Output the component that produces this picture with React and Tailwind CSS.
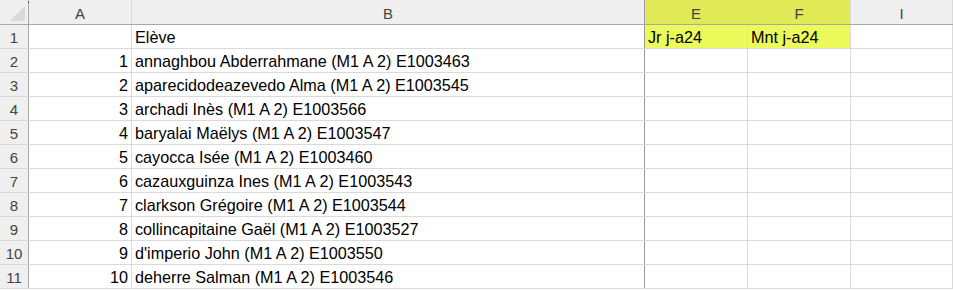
// Spreadsheet view — student list with two highlighted columns (E, F).

const COLS = [
  { key: 'A', width: 'w-[103px]' },
  { key: 'B', width: 'w-[513px]', darkEdge: true },
  { key: 'E', width: 'w-[103px]', marked: true },
  { key: 'F', width: 'w-[103px]', marked: true },
  { key: 'I', width: 'w-[102px]' },
]

const STUDENTS = [
  'annaghbou Abderrahmane (M1 A 2) E1003463',
  'aparecidodeazevedo Alma (M1 A 2) E1003545',
  'archadi Inès (M1 A 2) E1003566',
  'baryalai Maëlys (M1 A 2) E1003547',
  'cayocca Isée (M1 A 2) E1003460',
  'cazauxguinza Ines (M1 A 2) E1003543',
  'clarkson Grégoire (M1 A 2) E1003544',
  'collincapitaine Gaël (M1 A 2) E1003527',
  "d'imperio John (M1 A 2) E1003550",
  'deherre Salman (M1 A 2) E1003546',
]

function edge(col) {
  return col.darkEdge ? 'border-r-[#9b9b9b]' : 'border-r-[#dadada]'
}

function HeaderRow() {
  return (
    <div className="flex h-[25px] border-b border-[#a8a8a8] bg-[#efefef]">
      <div className="relative w-[29px] shrink-0 border-r border-[#a8a8a8]">
        <div className="absolute bottom-[3px] right-[3px] h-0 w-0 border-b-[15px] border-l-[15px] border-b-[#d9d9d9] border-l-transparent" />
        <div className="absolute right-[-1px] top-[2px] h-px w-px bg-black" />
      </div>
      {COLS.map((c) => (
        <div
          key={c.key}
          className={`${c.width} flex shrink-0 items-center justify-center border-r pt-[2px] text-[15px] text-[#444] ${edge(c)} ${c.marked ? 'bg-[#e1e957]' : ''}`}
        >
          {c.key}
        </div>
      ))}
    </div>
  )
}

function Row({ n, cells }) {
  return (
    <div className="flex h-[24px] border-b border-[#dadada]">
      <div className="flex w-[29px] shrink-0 items-center justify-center border-r border-[#a8a8a8] bg-[#efefef] pt-[2px] text-[15px] text-[#444]">
        {n}
      </div>
      {COLS.map((c, i) => (
        <div
          key={c.key}
          className={`${c.width} flex shrink-0 items-center overflow-hidden whitespace-nowrap border-r pt-[2px] ${edge(c)} ${
            i === 0 ? 'justify-end pr-[3px]' : 'pl-[3px]'
          } ${n === 1 && c.marked ? 'bg-[#ecfa5b]' : 'bg-white'}`}
        >
          {cells[i]}
        </div>
      ))}
    </div>
  )
}

export default function App() {
  const rows = [
    ['', 'Elève', 'Jr j-a24', 'Mnt j-a24', ''],
    ...STUDENTS.map((s, i) => [String(i + 1), s, '', '', '']),
  ]

  return (
    <div className="h-[290px] w-[953px] overflow-hidden bg-white font-['Liberation_Sans',sans-serif] text-[16.2px] leading-none text-black">
      <HeaderRow />
      {rows.map((cells, i) => (
        <Row key={i} n={i + 1} cells={cells} />
      ))}
    </div>
  )
}
